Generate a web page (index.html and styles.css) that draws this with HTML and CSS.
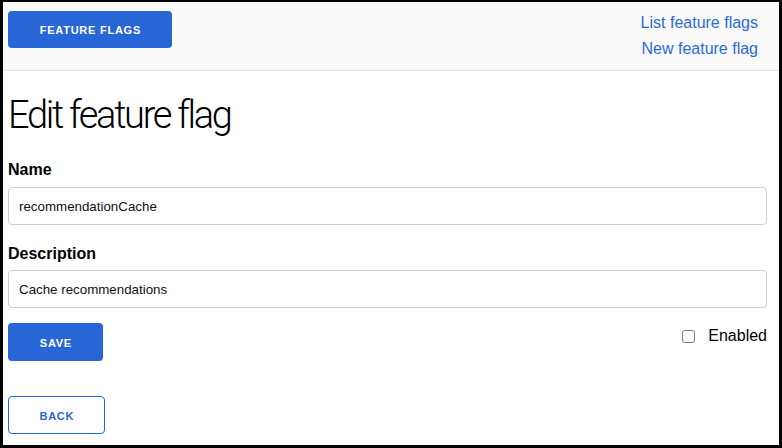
FILE: index.html
```html
<!DOCTYPE html>
<html lang="en">
<head>
<meta charset="utf-8">
<title>Edit feature flag</title>
<link rel="stylesheet" href="styles.css">
</head>
<body>
<div class="frame">
  <header class="topbar">
    <a class="btn btn-solid btn-brand" href="#">Feature Flags</a>
    <nav class="nav-links">
      <a href="#">List feature flags</a>
      <a href="#">New feature flag</a>
    </nav>
  </header>
  <main class="page">
    <h1 class="title">Edit feature flag</h1>
    <form class="form">
      <label class="field-label" for="name">Name</label>
      <input class="field-input" id="name" type="text" value="recommendationCache">
      <label class="field-label field-label-2" for="desc">Description</label>
      <input class="field-input field-input-2" id="desc" type="text" value="Cache recommendations">
      <div class="actions">
        <button class="btn btn-solid" type="button">Save</button>
        <label class="check">
          <input class="check-box" type="checkbox">
          <span class="check-text">Enabled</span>
        </label>
      </div>
    </form>
    <a class="btn btn-outline" href="#">Back</a>
  </main>
</div>
</body>
</html>
```
FILE: styles.css
```css
html, body {
  margin: 0;
  padding: 0;
  background: #ffffff;
}
body {
  font-family: "Liberation Sans", Arial, sans-serif;
  color: #000;
}
.frame {
  box-sizing: border-box;
  width: 782px;
  height: 448px;
  border-style: solid;
  border-color: #000;
  border-width: 2px 3px 3px 3px;
  overflow: hidden;
}
.topbar {
  box-sizing: border-box;
  height: 69px;
  background: #fafafa;
  border-bottom: 1px solid #e4e4e4;
  display: flex;
  justify-content: space-between;
  align-items: flex-start;
  padding: 9px 21px 0 5px;
}
.btn {
  box-sizing: border-box;
  display: inline-flex;
  align-items: center;
  justify-content: center;
  height: 38px;
  padding: 1px 31px 0 31.75px;
  border-radius: 4px;
  font-family: "Liberation Sans", Arial, sans-serif;
  font-size: 11px;
  font-weight: 700;
  letter-spacing: 0.75px;
  text-transform: uppercase;
  text-decoration: none;
  cursor: pointer;
}
.btn-solid {
  background: #2866d8;
  color: #fff;
  border: none;
}
.btn-brand {
  width: 164px;
  height: 37px;
  padding-top: 0;
}
.btn-outline {
  background: #fff;
  color: #2866d8;
  border: 1px solid #2866d8;
  width: 97px;
  margin-top: 35px;
}
.nav-links {
  display: flex;
  flex-direction: column;
  align-items: flex-end;
  margin-top: -1px;
}
.nav-links a {
  color: #2a6ad8;
  text-decoration: none;
  font-size: 16px;
  line-height: 26px;
}
.page {
  padding: 0 12px 0 5px;
}
.title {
  margin: 24px 0 0;
  height: 39px;
  font-family: Roboto, "Liberation Sans", sans-serif;
  font-size: 38px;
  line-height: 40px;
  font-weight: 300;
  letter-spacing: -2.3px;
  color: #000;
}
.form {
  display: flex;
  flex-direction: column;
}
.field-label {
  display: block;
  margin-top: 27px;
  font-size: 16px;
  font-weight: 700;
  line-height: 18px;
}
.field-label-2 {
  margin-top: 20px;
}
.field-input {
  box-sizing: border-box;
  margin-top: 8px;
  width: 100%;
  height: 38px;
  padding: 0 10px;
  border: 1px solid #cfcfcf;
  border-radius: 4px;
  font-family: "Liberation Sans", Arial, sans-serif;
  font-size: 13.333px;
  color: #111;
  background: #fff;
  outline: none;
}
.field-input-2 {
  margin-top: 7px;
}
.actions {
  display: flex;
  justify-content: space-between;
  align-items: flex-start;
  margin-top: 15px;
}
.actions .btn {
  width: 95px;
}
.check {
  display: flex;
  align-items: center;
  margin-top: 4px;
  font-size: 16px;
}
.check-box {
  appearance: none;
  -webkit-appearance: none;
  box-sizing: border-box;
  width: 13px;
  height: 13px;
  margin: 0 13px 0 0;
  border: 1px solid #7a7a7a;
  border-radius: 3px;
  background: #fff;
}
.check-text {
  line-height: 18px;
}
```
